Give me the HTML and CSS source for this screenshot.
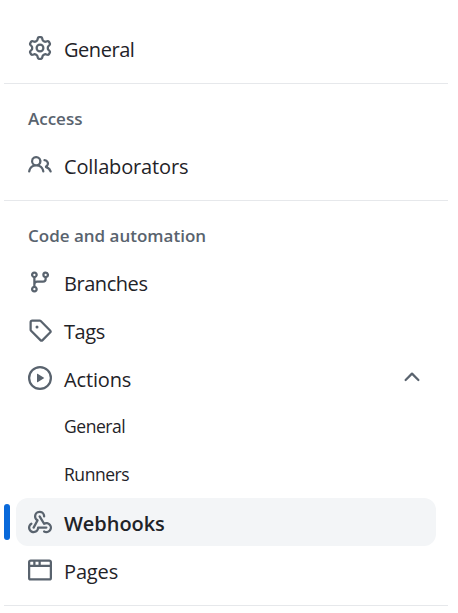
FILE: index.html
```html
<!DOCTYPE html>
<html lang="en">
<head>
<meta charset="utf-8">
<title>Settings</title>
<link rel="stylesheet" href="styles.css">
</head>
<body>
<nav class="sidebar">
  <ul class="group">
    <li class="item">
      <svg class="icon" viewBox="0 0 16 16"><path d="M8 0a8.2 8.2 0 0 1 .701.031C9.444.095 9.99.645 10.16 1.29l.288 1.107c.018.066.079.158.212.224.231.114.454.243.668.386.123.082.233.09.299.071l1.103-.303c.644-.176 1.392.021 1.82.63.27.385.506.792.704 1.218.315.675.111 1.422-.364 1.891l-.814.806c-.049.048-.098.147-.088.294.016.257.016.515 0 .772-.01.147.038.246.088.294l.814.806c.475.469.679 1.216.364 1.891a7.977 7.977 0 0 1-.704 1.217c-.428.61-1.176.807-1.82.63l-1.102-.302c-.067-.019-.177-.011-.3.071a5.909 5.909 0 0 1-.668.386c-.133.066-.194.158-.211.224l-.29 1.106c-.168.646-.715 1.196-1.458 1.26a8.006 8.006 0 0 1-1.402 0c-.743-.064-1.289-.614-1.458-1.26l-.289-1.106c-.018-.066-.079-.158-.212-.224a5.738 5.738 0 0 1-.668-.386c-.123-.082-.233-.09-.299-.071l-1.103.303c-.644.176-1.392-.021-1.82-.63a8.12 8.12 0 0 1-.704-1.218c-.315-.675-.111-1.422.363-1.891l.815-.806c.05-.048.098-.147.088-.294a6.214 6.214 0 0 1 0-.772c.01-.147-.038-.246-.088-.294l-.815-.806C.635 6.045.431 5.298.746 4.623a7.92 7.92 0 0 1 .704-1.217c.428-.61 1.176-.807 1.82-.63l1.102.302c.067.019.177.011.3-.071.214-.143.437-.272.668-.386.133-.066.194-.158.211-.224l.29-1.106C6.009.645 6.556.095 7.299.03 7.53.01 7.764 0 8 0Zm-.571 1.525c-.036.003-.108.036-.137.146l-.289 1.105c-.147.561-.549.967-.998 1.189-.173.086-.34.183-.5.29-.417.278-.97.423-1.529.27l-1.103-.303c-.109-.03-.175.016-.195.045-.22.312-.412.644-.573.99-.014.031-.021.11.059.19l.815.806c.411.406.562.957.53 1.456a4.709 4.709 0 0 0 0 .582c.032.499-.119 1.05-.53 1.456l-.815.806c-.081.08-.073.159-.059.19.162.346.353.677.573.989.02.03.085.076.195.046l1.102-.303c.56-.153 1.113-.008 1.53.27.161.107.328.204.501.29.447.222.85.629.997 1.189l.289 1.105c.029.109.101.143.137.146a6.6 6.6 0 0 0 1.142 0c.036-.003.108-.036.137-.146l.289-1.105c.147-.561.549-.967.998-1.189.173-.086.34-.183.5-.29.417-.278.97-.423 1.529-.27l1.103.303c.109.029.175-.016.195-.045.22-.313.411-.644.573-.99.014-.031.021-.11-.059-.19l-.815-.806c-.411-.406-.562-.957-.53-1.456a4.709 4.709 0 0 0 0-.582c-.032-.499.119-1.05.53-1.456l.815-.806c.081-.08.073-.159.059-.19a6.464 6.464 0 0 0-.573-.989c-.02-.03-.085-.076-.195-.046l-1.102.303c-.56.153-1.113.008-1.53-.27a4.44 4.44 0 0 0-.501-.29c-.447-.222-.85-.629-.997-1.189l-.289-1.105c-.029-.11-.101-.143-.137-.146a6.6 6.6 0 0 0-1.142 0ZM11 8a3 3 0 1 1-6 0 3 3 0 0 1 6 0ZM9.5 8a1.5 1.5 0 1 0-3.001.001A1.5 1.5 0 0 0 9.5 8Z"/></svg>
      <span class="label">General</span>
    </li>
  </ul>
  <h3 class="heading">Access</h3>
  <ul class="group">
    <li class="item">
      <svg class="icon" viewBox="0 0 16 16"><path d="M2 5.5a3.5 3.5 0 1 1 5.898 2.549 5.508 5.508 0 0 1 3.034 4.084.75.75 0 1 1-1.482.235 4 4 0 0 0-7.9 0 .75.75 0 0 1-1.482-.236A5.507 5.507 0 0 1 3.102 8.05 3.493 3.493 0 0 1 2 5.5ZM11 4a3.001 3.001 0 0 1 2.22 5.018 5.01 5.01 0 0 1 2.56 3.012.749.749 0 0 1-.885.954.752.752 0 0 1-.549-.514 3.507 3.507 0 0 0-2.522-2.372.75.75 0 0 1-.574-.73v-.352a.75.75 0 0 1 .416-.672A1.5 1.5 0 0 0 11 5.5.75.75 0 0 1 11 4Zm-5.5-.5a2 2 0 1 0-.001 3.999A2 2 0 0 0 5.5 3.5Z"/></svg>
      <span class="label wide">Collaborators</span>
    </li>
  </ul>
  <h3 class="heading">Code and automation</h3>
  <ul class="group">
    <li class="item">
      <svg class="icon" viewBox="0 0 16 16"><path d="M9.5 3.25a2.25 2.25 0 1 1 3 2.122V6A2.5 2.5 0 0 1 10 8.5H6a1 1 0 0 0-1 1v1.128a2.251 2.251 0 1 1-1.5 0V5.372a2.25 2.25 0 1 1 1.5 0v1.836A2.493 2.493 0 0 1 6 7h4a1 1 0 0 0 1-1v-.628A2.25 2.25 0 0 1 9.5 3.25Zm-6 0a.75.75 0 1 0 1.5 0 .75.75 0 0 0-1.5 0Zm8.25-.75a.75.75 0 1 0 0 1.5.75.75 0 0 0 0-1.5ZM4.25 12a.75.75 0 1 0 0 1.5.75.75 0 0 0 0-1.5Z"/></svg>
      <span class="label">Branches</span>
    </li>
    <li class="item">
      <svg class="icon" viewBox="0 0 16 16"><path d="M1 7.775V2.75C1 1.784 1.784 1 2.75 1h5.025c.464 0 .91.184 1.238.513l6.25 6.25a1.75 1.75 0 0 1 0 2.474l-5.026 5.026a1.75 1.75 0 0 1-2.474 0l-6.25-6.25A1.752 1.752 0 0 1 1 7.775Zm1.5 0c0 .066.026.13.073.177l6.25 6.25a.25.25 0 0 0 .354 0l5.025-5.025a.25.25 0 0 0 0-.354l-6.25-6.25a.25.25 0 0 0-.177-.073H2.75a.25.25 0 0 0-.25.25ZM6 5a1 1 0 1 1 0 2 1 1 0 0 1 0-2Z"/></svg>
      <span class="label">Tags</span>
    </li>
    <li class="item">
      <svg class="icon" viewBox="0 0 16 16"><path d="M8 0a8 8 0 1 1 0 16A8 8 0 0 1 8 0ZM1.5 8a6.5 6.5 0 1 0 13 0 6.5 6.5 0 0 0-13 0Zm4.879-2.773 4.264 2.559a.25.25 0 0 1 0 .428l-4.264 2.559A.25.25 0 0 1 6 10.559V5.442a.25.25 0 0 1 .379-.215Z"/></svg>
      <span class="label wide">Actions</span>
      <svg class="icon chevron" viewBox="0 0 16 16"><path d="M3.22 10.53a.749.749 0 0 1 0-1.06l4.25-4.25a.749.749 0 0 1 1.06 0l4.25 4.25a.749.749 0 1 1-1.06 1.06L8 6.811 4.28 10.53a.749.749 0 0 1-1.06 0Z"/></svg>
    </li>
    <li class="item sub"><span class="label">General</span></li>
    <li class="item sub"><span class="label">Runners</span></li>
    <li class="item current">
      <svg class="icon" viewBox="0 0 16 16"><path d="M5.5 4.25a2.25 2.25 0 0 1 4.5 0 .75.75 0 0 0 1.5 0 3.75 3.75 0 1 0-6.14 2.889l-2.272 4.258a.75.75 0 0 0 1.324.706L7 7.25a.75.75 0 0 0-.309-1.015A2.25 2.25 0 0 1 5.5 4.25Z"/><path d="M7.364 3.607a.75.75 0 0 1 1.03.257l2.608 4.349a3.75 3.75 0 1 1-.628 6.785.75.75 0 0 1 .752-1.299 2.25 2.25 0 1 0-.033-3.88.75.75 0 0 1-1.03-.256L7.107 4.636a.75.75 0 0 1 .257-1.03Z"/><path d="M2.9 8.776A.75.75 0 0 1 2.625 9.8 2.25 2.25 0 1 0 6 11.75a.75.75 0 0 1 .75-.751h5.5a.75.75 0 0 1 0 1.5H7.425a3.751 3.751 0 1 1-5.55-3.998.75.75 0 0 1 1.024.274Z"/></svg>
      <span class="label">Webhooks</span>
    </li>
    <li class="item">
      <svg class="icon" viewBox="0 0 16 16"><path d="M0 2.75C0 1.784.784 1 1.75 1h12.5c.966 0 1.75.784 1.75 1.75v10.5A1.75 1.75 0 0 1 14.25 15H1.75A1.75 1.75 0 0 1 0 13.25ZM14.5 6h-13v7.25c0 .138.112.25.25.25h12.5a.25.25 0 0 0 .25-.25Zm-6-3.5v2h6V2.75a.25.25 0 0 0-.25-.25ZM5 2.5v2h2v-2Zm-3.25 0a.25.25 0 0 0-.25.25V4.5h2v-2Z"/></svg>
      <span class="label wide">Pages</span>
    </li>
  </ul>
</nav>
</body>
</html>
```
FILE: styles.css
```css
* { box-sizing: border-box; }

body {
  margin: 0;
  background: #fff;
  color: #1f2328;
  font-family: "Open Sans", "Noto Sans", sans-serif;
}

.sidebar {
  width: 444px;
  margin-left: 4px;
  padding-top: 24px;
}

.group {
  list-style: none;
  margin: 0;
  padding: 0 12px 11px;
  border-bottom: 1px solid #e6e8eb;
}

.item {
  position: relative;
  display: flex;
  align-items: center;
  gap: 12px;
  height: 48px;
  padding: 0 12px;
  border-radius: 12px;
  font-size: 20px;
  letter-spacing: -0.45px;
}

.label {
  padding-top: 4px;
  line-height: 30px;
}

.wide {
  letter-spacing: -0.15px;
}

.icon {
  flex: none;
  width: 24px;
  height: 24px;
  fill: #59636e;
}

.chevron {
  margin: 0 0 2px auto;
}

.sub {
  padding-left: 48px;
  font-size: 17.5px;
}

.sub .label {
  padding-top: 0;
}

.current {
  background: #f3f5f7;
  font-weight: 600;
  letter-spacing: -0.05px;
}

.current::before {
  content: "";
  position: absolute;
  left: -12px;
  top: 6px;
  width: 6px;
  height: 36px;
  border-radius: 3px;
  background: #0969da;
}

.heading {
  margin: 0;
  padding: 21px 24px 9px;
  height: 57px;
  color: #59636e;
  font-size: 17px;
  font-weight: 600;
  line-height: 27px;
}
```
